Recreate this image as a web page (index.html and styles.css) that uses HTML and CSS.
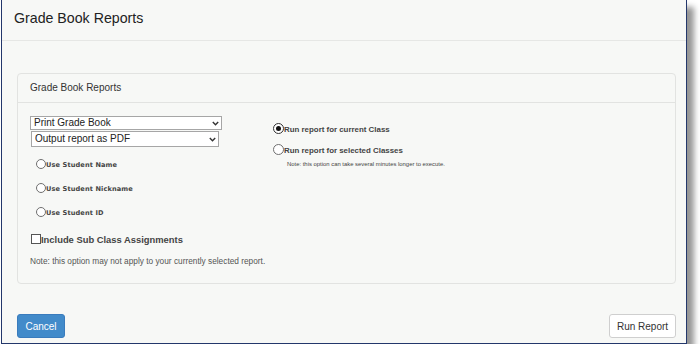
FILE: index.html
```html
<!DOCTYPE html>
<html lang="en">
<head>
<meta charset="utf-8">
<title>Grade Book Reports</title>
<link rel="stylesheet" href="styles.css">
</head>
<body>
<div class="dialog">
  <header class="dlg-header">
    <h1 class="dlg-title">Grade Book Reports</h1>
  </header>
  <section class="panel">
    <div class="panel-heading">Grade Book Reports</div>
    <div class="panel-body">
      <div class="col-left">
        <div class="select-wrap sel-report">
          <select class="sel"><option>Print Grade Book</option></select>
          <svg class="chev" width="7" height="5" viewBox="0 0 7 5"><polyline points="0.8,1 3.5,3.8 6.2,1" fill="none" stroke="#333" stroke-width="1.4"/></svg>
        </div>
        <div class="select-wrap sel-output">
          <select class="sel"><option>Output report as PDF</option></select>
          <svg class="chev" width="7" height="5" viewBox="0 0 7 5"><polyline points="0.8,1 3.5,3.8 6.2,1" fill="none" stroke="#333" stroke-width="1.4"/></svg>
        </div>
        <div class="name-options">
          <label class="opt-row"><span class="radio"></span><span class="opt-text">Use Student Name</span></label>
          <label class="opt-row"><span class="radio"></span><span class="opt-text">Use Student Nickname</span></label>
          <label class="opt-row"><span class="radio"></span><span class="opt-text">Use Student ID</span></label>
        </div>
        <label class="check-row"><span class="checkbox"></span><span class="check-text">Include Sub Class Assignments</span></label>
        <p class="note">Note: this option may not apply to your currently selected report.</p>
      </div>
      <div class="col-right">
        <label class="class-row"><span class="radio radio-lg checked"></span><span class="class-text">Run report for current Class</span></label>
        <label class="class-row"><span class="radio radio-lg"></span><span class="class-text">Run report for selected Classes</span></label>
        <p class="small-note">Note: this option can take several minutes longer to execute.</p>
      </div>
    </div>
  </section>
  <footer class="dlg-footer">
    <button class="btn btn-primary">Cancel</button>
    <button class="btn btn-default">Run Report</button>
  </footer>
</div>
</body>
</html>
```

FILE: styles.css
```css
* { box-sizing: border-box; }

body {
  margin: 0;
  background: #ffffff;
  font-family: "Liberation Sans", Arial, sans-serif;
  color: #333;
}

.dialog {
  margin-left: 1px;
  width: 686px;
  height: 344px;
  background: #f7f8f6;
  border-left: 1px solid #23376b;
  border-right: 1px solid #23376b;
  border-bottom: 1px solid #23376b;
  box-shadow: 7px 7px 6px rgba(0, 0, 0, 0.42);
  display: flex;
  flex-direction: column;
}

.dlg-header {
  height: 41px;
  border-bottom: 1px solid #e6e7e5;
  padding-left: 12px;
  display: flex;
  align-items: center;
}

.dlg-title {
  margin: 0;
  font-size: 14.2px;
  font-weight: normal;
  color: #222;
  line-height: 1;
  padding-bottom: 3px;
}

.panel {
  margin: 32px 10px 0 15px;
  height: 211px;
  border: 1px solid #e2e3e1;
  border-radius: 4px;
  background: #f7f8f6;
}

.panel-heading {
  height: 29px;
  border-bottom: 1px solid #e2e3e1;
  padding-left: 12px;
  font-size: 10px;
  line-height: 28px;
  color: #333;
}

.panel-body {
  display: grid;
  grid-template-columns: 243px 1fr;
  padding: 13px 12px 0 12px;
}

.select-wrap {
  position: relative;
}

.sel {
  -webkit-appearance: none;
  appearance: none;
  display: block;
  margin: 0;
  border: 1px solid #a6a6a6;
  border-radius: 0;
  background: #fff;
  font-family: "Liberation Sans", Arial, sans-serif;
  font-size: 10px;
  color: #222;
  padding: 0 3px;
}

.sel-report .sel { width: 192px; height: 14px; line-height: 12px; }
.sel-output { margin-top: 1px; }
.sel-output .sel { width: 188px; height: 16px; line-height: 14px; margin-left: 1px; }

.chev {
  position: absolute;
  top: 50%;
  margin-top: -2px;
  pointer-events: none;
}
.sel-report .chev { left: 182px; }
.sel-output .chev { left: 179px; }

.name-options {
  margin-top: 5px;
}

.opt-row {
  display: flex;
  align-items: center;
  height: 24px;
  padding-left: 6px;
}

.radio {
  display: inline-block;
  width: 10px;
  height: 10px;
  border: 1px solid #6f6f6f;
  border-radius: 50%;
  background: #fff;
  position: relative;
  flex: none;
}
.radio-lg { width: 11px; height: 11px; }
.radio.checked { border-color: #333; }
.radio.checked::after {
  content: "";
  position: absolute;
  left: 2px;
  top: 2px;
  width: 5px;
  height: 5px;
  border-radius: 50%;
  background: #111;
}

.opt-text {
  font-family: "DejaVu Sans", Verdana, sans-serif;
  font-weight: bold;
  font-size: 6.6px;
  letter-spacing: 0.12px;
  color: #444;
  padding-top: 2px;
}

.check-row {
  display: flex;
  align-items: center;
  height: 22px;
  margin-top: 4px;
  padding-left: 1px;
}

.checkbox {
  display: inline-block;
  width: 10px;
  height: 10px;
  border: 1px solid #555;
  background: #fff;
  flex: none;
  margin-top: -1px;
}

.check-text {
  font-size: 9.4px;
  font-weight: bold;
  color: #444;
}

.note {
  margin: 4px 0 0 0;
  height: 14px;
  line-height: 14px;
  font-size: 8.3px;
  color: #555;
}

.col-right {
  padding-top: 2px;
}

.class-row {
  display: flex;
  align-items: center;
  height: 21px;
}

.class-text {
  font-size: 7.9px;
  font-weight: bold;
  color: #444;
  padding-top: 2px;
}

.small-note {
  margin: 0 0 0 14px;
  height: 8px;
  line-height: 8px;
  font-size: 5.9px;
  color: #444;
}

.dlg-footer {
  margin-top: 30px;
  padding: 0 10px 0 15px;
  display: flex;
  justify-content: space-between;
}

.btn {
  height: 24px;
  border-radius: 3px;
  font-family: "Liberation Sans", Arial, sans-serif;
  font-size: 10px;
  padding: 0;
  margin: 0;
}

.btn-primary {
  width: 48px;
  background: #428bca;
  border: 1px solid #3a7cbd;
  color: #fff;
}

.btn-default {
  width: 67px;
  background: #fff;
  border: 1px solid #cfcfcf;
  color: #333;
}
```
